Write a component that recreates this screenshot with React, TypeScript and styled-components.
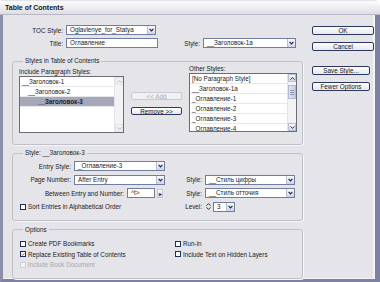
import styled, { createGlobalStyle } from "styled-components";

const GlobalStyle = createGlobalStyle`
  html, body {
    margin: 0;
    padding: 0;
    background: #ffffff;
  }
  body {
    width: 380px;
    height: 282px;
    overflow: hidden;
    font-family: "Liberation Sans", Arial, sans-serif;
    font-size: 6.3px;
    color: #1b1b22;
  }
`;

const Chevron = () => (
  <svg width="5" height="4" viewBox="0 0 5 4">
    <path d="M0.6 0.8 L2.5 2.9 L4.4 0.8" fill="none" stroke="#1d2340" strokeWidth="1.1" />
  </svg>
);

const Arrow = ({ dir, dim }: { dir: "up" | "down"; dim?: boolean }) => (
  <svg width="5" height="3" viewBox="0 0 5 3">
    <path
      d={dir === "up" ? "M0.5 2.6 L2.5 0.6 L4.5 2.6" : "M0.5 0.4 L2.5 2.4 L4.5 0.4"}
      fill="none"
      stroke={dim ? "#b4b4c0" : "#2a3050"}
      strokeWidth="1"
    />
  </svg>
);

const Select = ({ value, width }: { value: string; width: number }) => (
  <SelectBox $width={width}>
    <SelectText>{value}</SelectText>
    <DropButton>
      <Chevron />
    </DropButton>
  </SelectBox>
);

const Check = ({ label, checked, disabled }: { label: string; checked?: boolean; disabled?: boolean }) => (
  <CheckRow $disabled={disabled}>
    <CheckBox $disabled={disabled}>
      {checked && (
        <svg width="5" height="5" viewBox="0 0 5 5">
          <path d="M0.7 2.5 L2 3.8 L4.4 1" fill="none" stroke="#2f9a2a" strokeWidth="1.1" />
        </svg>
      )}
    </CheckBox>
    {label}
  </CheckRow>
);

const includeStyles = [
  { name: "__Заголовок-1", indent: 0 },
  { name: "__Заголовок-2", indent: 6 },
  { name: "__Заголовок-3", indent: 16, selected: true },
];

const otherStyles = [
  "[No Paragraph Style]",
  "__Заголовок-1а",
  "_Оглавление-1",
  "_Оглавление-2",
  "_Оглавление-3",
  "_Оглавление-4",
];

const App = () => {
  return (
    <>
      <GlobalStyle />
      <Window>
        <TitleBar>Table of Contents</TitleBar>
        <Frame>
          <Main>
            <FieldRow $top={10}>
              <Label $width={52}>TOC Style:</Label>
              <Select value="Oglavlenye_for_Statya" width={90} />
            </FieldRow>
            <FieldRow $top={3}>
              <Label $width={52}>Title:</Label>
              <TextInput $width={92}>Оглавление</TextInput>
              <Label $width={41}>Style:</Label>
              <Select value="__Заголовок-1а" width={93} />
            </FieldRow>

            <Group $top={9}>
              <Legend>Styles in Table of Contents</Legend>
              <StylesGrid>
                <Column>
                  <Caption>Include Paragraph Styles:</Caption>
                  <List $height={55}>
                    <Rows>
                      {includeStyles.map((s) => (
                        <ListRow key={s.name} $indent={s.indent} $selected={s.selected}>
                          {s.name}
                        </ListRow>
                      ))}
                    </Rows>
                    <Scrollbar>
                      <ScrollButton $dim>
                        <Arrow dir="up" dim />
                      </ScrollButton>
                      <Track />
                      <ScrollButton $dim>
                        <Arrow dir="down" dim />
                      </ScrollButton>
                    </Scrollbar>
                  </List>
                </Column>
                <MoveButtons>
                  <Button $width={51} $disabled>
                    {"<< Add"}
                  </Button>
                  <Button $width={51}>{"Remove >>"}</Button>
                </MoveButtons>
                <Column $shift={-3}>
                  <Caption>Other Styles:</Caption>
                  <List $height={57}>
                    <Rows>
                      {otherStyles.map((s) => (
                        <ListRow key={s} $indent={0}>
                          {s}
                        </ListRow>
                      ))}
                    </Rows>
                    <Scrollbar>
                      <ScrollButton>
                        <Arrow dir="up" />
                      </ScrollButton>
                      <Track>
                        <Thumb>
                          <Grip />
                          <Grip />
                          <Grip />
                        </Thumb>
                      </Track>
                      <ScrollButton>
                        <Arrow dir="down" />
                      </ScrollButton>
                    </Scrollbar>
                  </List>
                </Column>
              </StylesGrid>
            </Group>

            <Group $top={4}>
              <Legend>Style: __Заголовок-3</Legend>
              <EntryGrid>
                <FieldRow>
                  <Label $width={52}>Entry Style:</Label>
                  <Select value="_Оглавление-3" width={91} />
                </FieldRow>
                <span />
                <FieldRow>
                  <Label $width={52}>Page Number:</Label>
                  <Select value="After Entry" width={91} />
                </FieldRow>
                <FieldRow>
                  <Label $width={33}>Style:</Label>
                  <Select value="__Стиль цифры" width={90} />
                </FieldRow>
                <FieldRow>
                  <Label $width={105}>Between Entry and Number:</Label>
                  <TextInput $width={28}>^t&gt;</TextInput>
                  <SideArrow>▸</SideArrow>
                </FieldRow>
                <FieldRow>
                  <Label $width={33}>Style:</Label>
                  <Select value="__Стиль отточия" width={90} />
                </FieldRow>
                <Check label="Sort Entries in Alphabetical Order" />
                <FieldRow>
                  <Label $width={33}>Level:</Label>
                  <Spinner>
                    <Arrow dir="up" />
                    <Arrow dir="down" />
                  </Spinner>
                  <Select value="3" width={22} />
                </FieldRow>
              </EntryGrid>
            </Group>

            <Group $top={5}>
              <Legend>Options</Legend>
              <OptionsGrid>
                <Check label="Create PDF Bookmarks" />
                <Check label="Run-in" />
                <Check label="Replace Existing Table of Contents" checked />
                <Check label="Include Text on Hidden Layers" />
                <Check label="Include Book Document" disabled />
              </OptionsGrid>
            </Group>
          </Main>

          <Actions>
            <Button $width={62} $height={9}>OK</Button>
            <Button $width={62} $height={9}>Cancel</Button>
            <Button $width={58} $height={9} $gap={8}>Save Style...</Button>
            <Button $width={58} $height={9}>Fewer Options</Button>
          </Actions>
        </Frame>
      </Window>
    </>
  );
};

const Window = styled.div`
  width: 380px;
  height: 282px;
  display: flex;
  flex-direction: column;
`;

const TitleBar = styled.div`
  height: 15px;
  box-sizing: border-box;
  padding-left: 5px;
  line-height: 15px;
  font-size: 7px;
  font-weight: bold;
  color: #15151c;
  background: linear-gradient(#c9cad3 0, #fbfbfd 1px, #ececf0 60%, #dcdce3 100%);
  border-top-left-radius: 3px;
  border-top-right-radius: 6px;
  border-bottom: 1px solid #b9bac6;
`;

const Frame = styled.div`
  flex: 1;
  display: flex;
  background: #e4e4e9;
  border-left: 3px solid #8b8fab;
  border-right: 5px solid #7d82a2;
  border-bottom: 4px solid #7d82a2;
  box-shadow: inset -2px 0 0 #f4f4f7, inset 0 -1px 0 #f4f4f7;
  padding-left: 9px;
`;

const Main = styled.div`
  width: 291px;
  display: flex;
  flex-direction: column;
`;

const FieldRow = styled.div<{ $top?: number }>`
  display: flex;
  align-items: center;
  gap: 2px;
  height: 10px;
  margin-top: ${(p) => p.$top ?? 0}px;
`;

const Label = styled.div<{ $width: number }>`
  width: ${(p) => p.$width}px;
  flex-shrink: 0;
  text-align: right;
  white-space: nowrap;
  padding-right: 1px;
  box-sizing: border-box;
`;

const SelectBox = styled.div<{ $width: number }>`
  width: ${(p) => p.$width}px;
  height: 10px;
  box-sizing: border-box;
  display: flex;
  border: 1px solid #6f7d9e;
  background: #ffffff;
  flex-shrink: 0;
`;

const SelectText = styled.div`
  flex: 1;
  padding-left: 3px;
  line-height: 8px;
  white-space: nowrap;
  overflow: hidden;
`;

const DropButton = styled.div`
  width: 7px;
  display: flex;
  align-items: center;
  justify-content: center;
  background: linear-gradient(#fafbfe, #cdd3e6);
  border-left: 1px solid #b7bfd6;
`;

const TextInput = styled.div<{ $width: number }>`
  width: ${(p) => p.$width}px;
  height: 10px;
  box-sizing: border-box;
  border: 1px solid #6f7d9e;
  background: #ffffff;
  padding-left: 3px;
  line-height: 8px;
  white-space: nowrap;
  flex-shrink: 0;
`;

const SideArrow = styled.div`
  width: 6px;
  height: 9px;
  font-size: 6px;
  line-height: 9px;
  text-align: center;
  color: #1d2340;
  background: linear-gradient(#fafbfe, #d2d6e4);
  border: 1px solid #c4c8d6;
  box-sizing: border-box;
`;

const Group = styled.fieldset<{ $top: number }>`
  margin: ${(p) => p.$top}px 0 0 0;
  padding: 0 6px 0 6px;
  min-inline-size: 0;
  border: 1px solid #c0c0c8;
  border-radius: 3px;
  box-shadow: 1px 1px 0 #f6f6f8;
`;

const Legend = styled.legend`
  padding: 0 2px;
  margin-left: 4px;
  line-height: 8px;
`;

const StylesGrid = styled.div`
  display: grid;
  grid-template-columns: 105px 51px 108px;
  column-gap: 7px;
  padding: 3px 0 11px 0;
  align-items: start;
`;

const Column = styled.div<{ $shift?: number }>`
  display: flex;
  flex-direction: column;
  margin-top: ${(p) => p.$shift ?? 0}px;
`;

const Caption = styled.div`
  line-height: 8px;
  white-space: nowrap;
`;

const List = styled.div<{ $height: number }>`
  height: ${(p) => p.$height}px;
  display: flex;
  border: 1px solid #6c6c78;
  background: #ffffff;
  overflow: hidden;
`;

const Rows = styled.div`
  flex: 1;
  overflow: hidden;
`;

const ListRow = styled.div<{ $indent: number; $selected?: boolean }>`
  height: 10px;
  line-height: 10px;
  box-sizing: border-box;
  padding-left: ${(p) => 2 + p.$indent}px;
  border-bottom: 1px solid #e7e7ec;
  white-space: nowrap;
  background: ${(p) => (p.$selected ? "#a7a7ba" : "transparent")};
  font-weight: ${(p) => (p.$selected ? "bold" : "normal")};
`;

const Scrollbar = styled.div`
  width: 8px;
  display: flex;
  flex-direction: column;
  background: #f3f3f6;
  border-left: 1px solid #e2e2e8;
`;

const ScrollButton = styled.div<{ $dim?: boolean }>`
  height: 8px;
  display: flex;
  align-items: center;
  justify-content: center;
  background: ${(p) => (p.$dim ? "#f0f1f5" : "linear-gradient(#fafbfe, #d3d8e8)")};
  border: 1px solid ${(p) => (p.$dim ? "#e4e5ec" : "#b8bfd4")};
  box-sizing: border-box;
`;

const Track = styled.div`
  flex: 1;
`;

const Thumb = styled.div`
  margin-top: 3px;
  height: 14px;
  box-sizing: border-box;
  display: flex;
  flex-direction: column;
  align-items: center;
  justify-content: center;
  gap: 1px;
  background: linear-gradient(90deg, #dfe3f0, #c9cfe3);
  border: 1px solid #b3bad1;
`;

const Grip = styled.div`
  width: 4px;
  height: 1px;
  background: #8e96b4;
`;

const MoveButtons = styled.div`
  display: flex;
  flex-direction: column;
  gap: 7px;
  padding-top: 24px;
`;

const Button = styled.div<{ $width: number; $height?: number; $disabled?: boolean; $gap?: number }>`
  width: ${(p) => p.$width}px;
  height: ${(p) => p.$height ?? 8}px;
  margin-top: ${(p) => p.$gap ?? 0}px;
  box-sizing: border-box;
  display: flex;
  align-items: center;
  justify-content: center;
  white-space: nowrap;
  border-radius: 2px;
  border: 1px solid ${(p) => (p.$disabled ? "#c9c9cf" : "#2b3863")};
  color: ${(p) => (p.$disabled ? "#a9a9b2" : "#15151c")};
  background: ${(p) => (p.$disabled ? "#f1f1f3" : "linear-gradient(#ffffff, #e6e6ee)")};
`;

const EntryGrid = styled.div`
  display: grid;
  grid-template-columns: 150px 125px;
  grid-template-rows: repeat(4, 10px);
  row-gap: 3.5px;
  padding: 4px 0 8px 1px;
`;

const Spinner = styled.div`
  width: 6px;
  height: 9px;
  display: flex;
  flex-direction: column;
  align-items: center;
  justify-content: center;
  gap: 1px;
  flex-shrink: 0;
`;

const CheckRow = styled.div<{ $disabled?: boolean }>`
  display: flex;
  align-items: center;
  gap: 2px;
  height: 10px;
  white-space: nowrap;
  color: ${(p) => (p.$disabled ? "#a9a9b0" : "inherit")};
`;

const CheckBox = styled.div<{ $disabled?: boolean }>`
  width: 6px;
  height: 6px;
  box-sizing: border-box;
  display: flex;
  align-items: center;
  justify-content: center;
  border: 1px solid ${(p) => (p.$disabled ? "#cfcfd4" : "#1f2f5c")};
  background: ${(p) => (p.$disabled ? "#f3f3f5" : "#ffffff")};
`;

const OptionsGrid = styled.div`
  display: grid;
  grid-template-columns: 155px 1fr;
  grid-template-rows: repeat(3, 10px);
  row-gap: 0.5px;
  padding: 5px 0 8px 1px;
`;

const Actions = styled.div`
  width: 62px;
  margin-left: 9px;
  padding-top: 11px;
  display: flex;
  flex-direction: column;
  gap: 7px;
`;

export default App;
